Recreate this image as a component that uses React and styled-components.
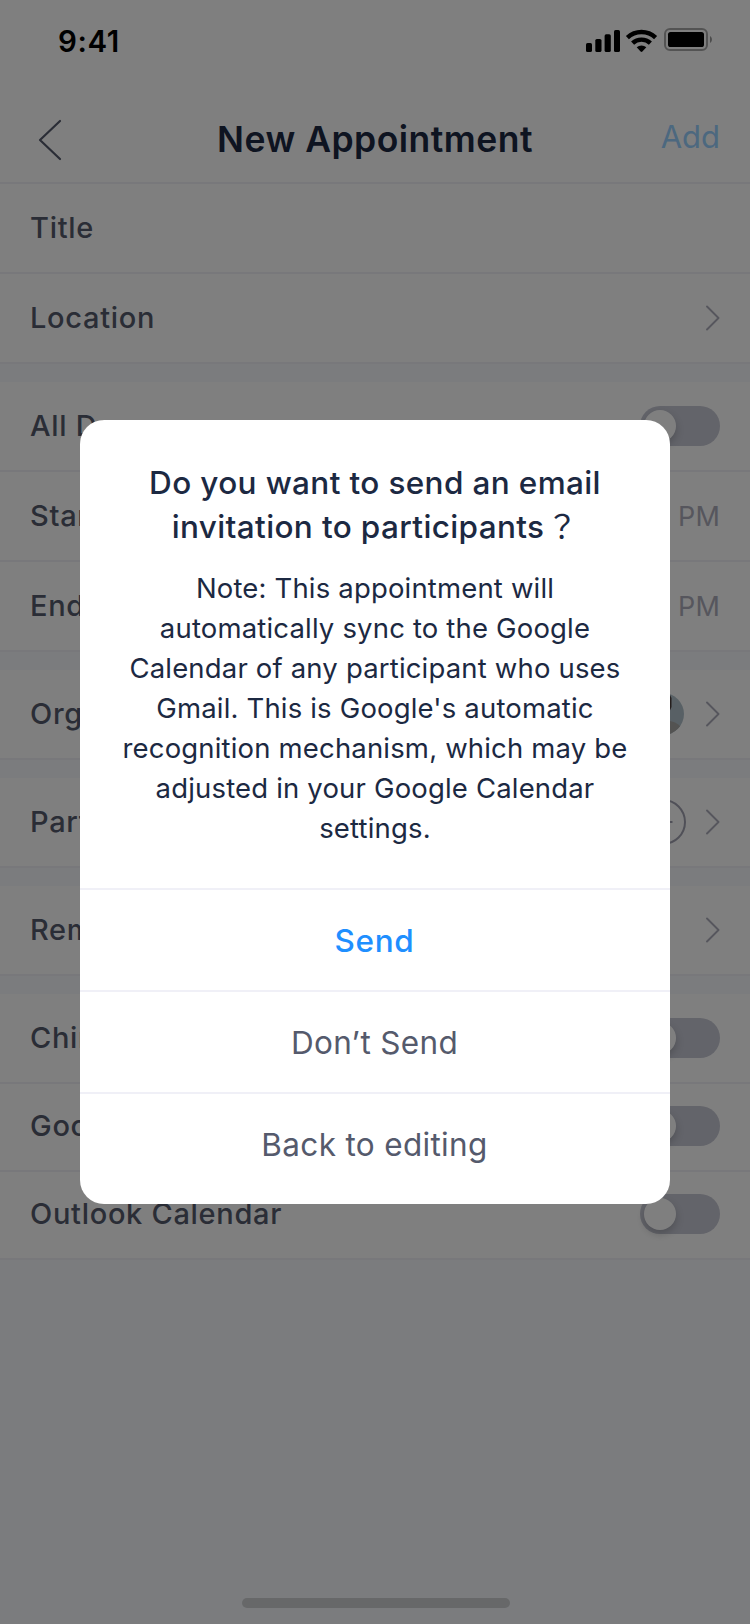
import React from 'react';
import styled, { createGlobalStyle } from 'styled-components';

const COLORS = {
  ink: '#1c2942',
  label: '#555a6c',
  muted: '#acadbb',
  toggle: '#c6c8d4',
  divider: '#f0f0f7',
  gap: '#f6f9fc',
  blue: '#1f8fff',
  paleBlue: '#98d0ff',
};

const GROUPS = [
  [
    { id: 'title', label: 'Title' },
    { id: 'location', label: 'Location', chevron: true },
  ],
  [
    { id: 'all-day', label: 'All Day', toggle: true },
    { id: 'start', label: 'Start', value: '2:00 PM' },
    { id: 'end', label: 'End', value: '3:00 PM' },
  ],
  [{ id: 'organizer', label: 'Organizer', avatar: true, chevron: true }],
  [{ id: 'participants', label: 'Participants', add: true, chevron: true }],
  [{ id: 'reminder', label: 'Reminder', chevron: true }],
  [
    { id: 'chime', label: 'Chime Calendar', toggle: true },
    { id: 'google', label: 'Google Calendar', toggle: true, compact: true },
    { id: 'outlook', label: 'Outlook Calendar', toggle: true, compact: true },
  ],
];

const StatusIcons = () => (
  <svg width="128" height="26" viewBox="0 0 128 26">
    <rect x="0" y="15" width="6" height="9" rx="1.6" />
    <rect x="9.3" y="11" width="6.2" height="13" rx="1.6" />
    <rect x="18.6" y="6.3" width="6.2" height="17.7" rx="1.6" />
    <rect x="28" y="2" width="6" height="22" rx="1.6" />
    <g fill="none" stroke="#000" strokeWidth="4.4">
      <path d="M41.4 9.6a20.5 20.5 0 0 1 28.2 0" />
      <path d="M46.6 15.2a12.8 12.8 0 0 1 17.8 0" />
    </g>
    <path d="M50.7 19.3a7 7 0 0 1 9.6 0l-3.9 4.2a1.3 1.3 0 0 1-1.8 0z" />
    <rect
      x="79"
      y="1"
      width="42"
      height="21"
      rx="5"
      fill="none"
      stroke="#000"
      strokeOpacity="0.35"
      strokeWidth="2"
    />
    <rect x="82" y="4" width="36" height="15" rx="2.6" />
    <path d="M124 8c2.6 1.4 2.6 5.6 0 7z" opacity="0.4" />
  </svg>
);

const BackIcon = () => (
  <svg width="24" height="42" viewBox="0 0 24 42" fill="none">
    <path
      d="M22 2L2 21l20 19"
      stroke={COLORS.label}
      strokeWidth="2.2"
      strokeLinecap="round"
      strokeLinejoin="round"
    />
  </svg>
);

const Chevron = () => (
  <svg width="14" height="26" viewBox="0 0 14 26" fill="none">
    <path
      d="M1 1.5L12.5 13 1 24.5"
      stroke={COLORS.muted}
      strokeWidth="1.9"
      strokeLinecap="round"
      strokeLinejoin="round"
    />
  </svg>
);

const AddIcon = () => (
  <svg width="46" height="46" viewBox="0 0 46 46" fill="none">
    <circle cx="23" cy="23" r="22" stroke="#a0a1b0" strokeWidth="2" />
    <path d="M13.5 23h19M23 13.5v19" stroke="#a0a1b0" strokeWidth="2" />
  </svg>
);

const Avatar = () => (
  <svg width="42" height="42" viewBox="0 0 42 42">
    <clipPath id="avatar-clip">
      <circle cx="21" cy="21" r="21" />
    </clipPath>
    <g clipPath="url(#avatar-clip)">
      <rect width="42" height="42" fill="#b0c1cb" />
      <path d="M12 0h15l2.5 5v9L26 22H12z" fill="#4a3f3c" />
      <path d="M14 6h13v12l-5 8h-8z" fill="#c79f8a" />
      <path d="M0 28h28q6 1 10 5v9H0z" fill="#a6a6a4" />
    </g>
  </svg>
);

const App = () => (
  <>
    <GlobalStyles />
    <Screen>
      <StatusBar>
        <Time>9:41</Time>
        <StatusIcons />
      </StatusBar>
      <NavBar>
        <BackButton>
          <BackIcon />
        </BackButton>
        <NavTitle>New Appointment</NavTitle>
        <AddButton>Add</AddButton>
      </NavBar>

      <Form>
        {GROUPS.map(rows => (
          <Group key={rows[0].id}>
            {rows.map(({ id, label, value, toggle, avatar, add, chevron, compact }) => (
              <Row key={id} $compact={compact}>
                <Label>{label}</Label>
                {value && <Value>{value}</Value>}
                {toggle && (
                  <Toggle>
                    <Knob />
                  </Toggle>
                )}
                {(avatar || add || chevron) && (
                  <Accessory $gap={add ? 20 : 22}>
                    {avatar && <Avatar />}
                    {add && <AddIcon />}
                    {chevron && <Chevron />}
                  </Accessory>
                )}
              </Row>
            ))}
          </Group>
        ))}
      </Form>
      <HomeIndicator />
    </Screen>

    <Backdrop>
      <Dialog>
        <DialogTitle>
          Do you want to send an email invitation to participants
          <QuestionMark>？</QuestionMark>
        </DialogTitle>
        <DialogBody>
          Note: This appointment will automatically sync to the Google Calendar
          of any participant who uses Gmail. This is Google's automatic
          recognition mechanism, which may be adjusted in your Google Calendar
          settings.
        </DialogBody>
        <DialogAction $primary>Send</DialogAction>
        <DialogAction>Don’t Send</DialogAction>
        <DialogAction>Back to editing</DialogAction>
      </Dialog>
    </Backdrop>
  </>
);

const GlobalStyles = createGlobalStyle`
  *, *::before, *::after {
    box-sizing: border-box;
  }

  body {
    margin: 0;
    font-family: Inter, 'Noto Sans CJK TC', sans-serif;
  }

  button {
    border: 0;
    padding: 0;
    background: none;
    font-family: inherit;
  }

  svg {
    display: block;
  }

  h1, h2, p {
    margin: 0;
  }
`;

const Screen = styled.div`
  display: flex;
  flex-direction: column;
  height: 1624px;
  background: ${COLORS.gap};
`;

const StatusBar = styled.div`
  display: flex;
  justify-content: space-between;
  align-items: flex-start;
  height: 88px;
  padding: 28px 36px 0 58px;
  background: white;
`;

const Time = styled.span`
  font-size: 29.5px;
  line-height: 26px;
  font-weight: 600;
  letter-spacing: 0.6px;
  color: black;
`;

const NavBar = styled.header`
  display: grid;
  grid-template-columns: 1fr auto 1fr;
  align-items: center;
  height: 96px;
  padding: 8px 30px 0;
  background: white;
  border-bottom: 2px solid ${COLORS.divider};
`;

const BackButton = styled.button`
  justify-self: start;
  padding: 2px 0 0 8px;
`;

const NavTitle = styled.h1`
  font-size: 35.5px;
  font-weight: 600;
  letter-spacing: 0.48px;
  color: ${COLORS.ink};
`;

const AddButton = styled.button`
  justify-self: end;
  padding-bottom: 6px;
  font-size: 31px;
  font-weight: 400;
  color: ${COLORS.paleBlue};
`;

const Form = styled.main`
  flex: 1;
  display: flex;
  flex-direction: column;
  gap: 18px;
`;

const Group = styled.section`
  background: white;
`;

const Row = styled.div`
  display: flex;
  align-items: center;
  justify-content: space-between;
  height: ${props => (props.$compact ? 88 : 90)}px;
  padding: 0 30px ${props => (props.$compact ? 2 : 0)}px;
  border-bottom: 2px solid ${COLORS.divider};
`;

const Label = styled.span`
  padding-bottom: 2px;
  font-size: 29px;
  font-weight: 500;
  letter-spacing: 0.7px;
  color: ${COLORS.label};
`;

const Value = styled.span`
  font-size: 27px;
  letter-spacing: 0.2px;
  color: ${COLORS.muted};
`;

const Toggle = styled.div`
  width: 80px;
  height: 40px;
  padding: 4px;
  border-radius: 20px;
  background: ${COLORS.toggle};
`;

const Knob = styled.div`
  width: 32px;
  height: 32px;
  border-radius: 50%;
  background: white;
  box-shadow: 0 4px 8px rgba(0, 0, 0, 0.2);
`;

const Accessory = styled.div`
  display: flex;
  align-items: center;
  gap: ${props => props.$gap}px;
`;

const HomeIndicator = styled.div`
  align-self: center;
  width: 268px;
  height: 10px;
  margin: 0 0 16px 2px;
  border-radius: 5px;
  background: #ced0d3;
`;

const Backdrop = styled.div`
  position: fixed;
  inset: 0;
  display: flex;
  align-items: center;
  justify-content: center;
  background: rgba(0, 0, 0, 0.5);
`;

const Dialog = styled.div`
  display: flex;
  flex-direction: column;
  width: 590px;
  height: 784px;
  padding-bottom: 10px;
  border-radius: 24px;
  background: white;
  text-align: center;
  color: ${COLORS.ink};
`;

const DialogTitle = styled.h2`
  padding: 41px 40px 0;
  font-size: 31.5px;
  line-height: 44px;
  font-weight: 500;
  letter-spacing: 0.36px;
`;

const QuestionMark = styled.span`
  margin-left: 2px;
  font-weight: 400;
`;

const DialogBody = styled.p`
  flex: 1;
  padding: 19px 40px 0;
  font-size: 27.5px;
  line-height: 40px;
  letter-spacing: 0.17px;
`;

const DialogAction = styled.button`
  height: 102px;
  padding-right: 1px;
  border-top: 2px solid ${COLORS.divider};
  font-size: 31.5px;
  font-weight: ${props => (props.$primary ? 500 : 400)};
  letter-spacing: ${props => (props.$primary ? 0.7 : 0.33)}px;
  color: ${props => (props.$primary ? COLORS.blue : COLORS.label)};
`;

export default App;
